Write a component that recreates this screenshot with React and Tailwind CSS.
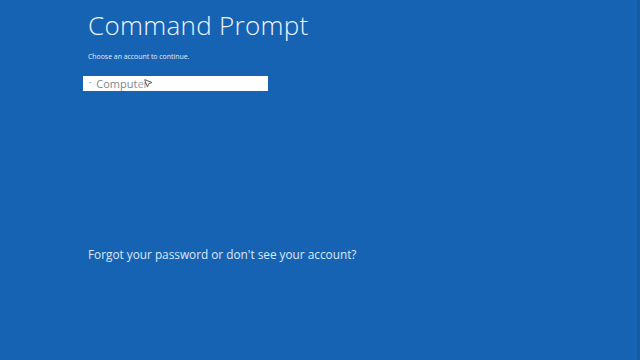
import { MousePointer2 } from 'lucide-react';

const App = () => {
  return (
    <div className="w-[640px] h-[360px] bg-[#1763b3] overflow-hidden flex" style={{ fontFamily: '"Open Sans", "Noto Sans", sans-serif' }}>
      <div className="flex-1 flex flex-col pl-[88px] pt-[9px]">
        <h1 className="text-[26px] leading-[32px] font-light text-[#eef4fb] tracking-[0.3px]">Command Prompt</h1>
        <p className="mt-[12px] text-[6.9px] leading-[8px] text-[#e3ecf7]">Choose an account to continue.</p>
        <div className="mt-[15px] -ml-[5px] w-[185px] h-[15px] bg-white flex items-center pl-[6px] relative">
          <span className="text-[6px] text-[#8a8f96] mr-[5px]">•</span>
          <span className="text-[11px] leading-[14px] text-[#7d8590]">Comput</span>
          <span className="text-[11px] leading-[14px] text-[#9aa0a8]">er</span>
          <MousePointer2 className="absolute left-[60px] top-[2px] w-[10px] h-[10px] text-black fill-white" strokeWidth={1.5} />
        </div>
        <p className="mt-[156px] text-[11.8px] leading-[14px] text-[#dce8f6]">Forgot your password or don't see your account?</p>
      </div>
      <div className="w-[3px] h-full bg-[#155aa3]" />
    </div>
  );
};
export default App;
